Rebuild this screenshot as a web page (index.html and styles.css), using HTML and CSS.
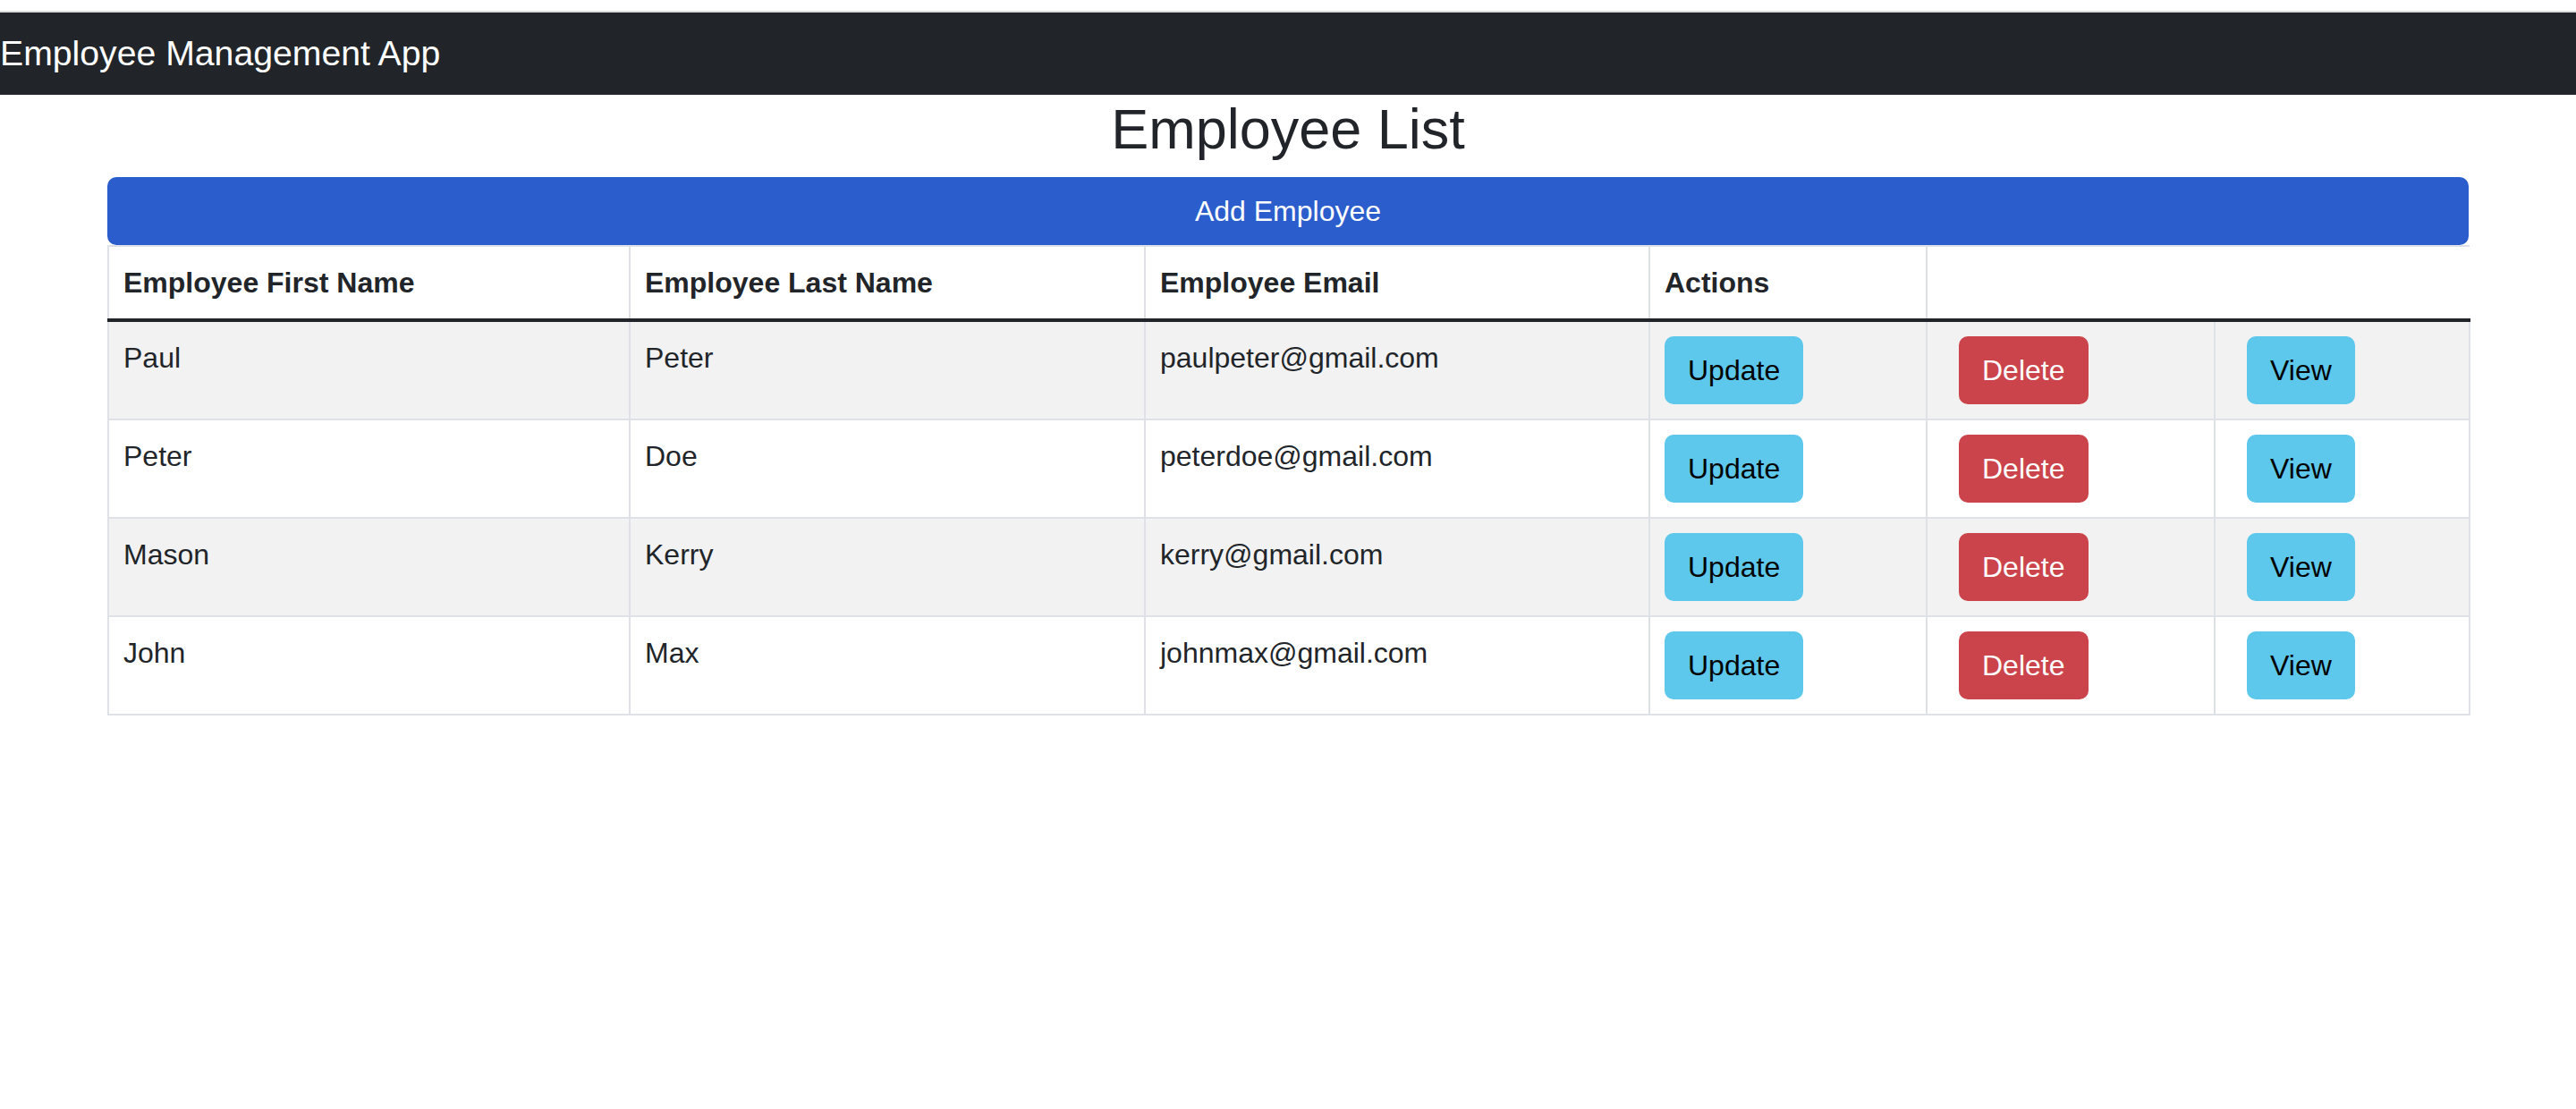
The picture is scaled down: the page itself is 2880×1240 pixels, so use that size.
FILE: index.html
```html
<!DOCTYPE html>
<html lang="en">
<head>
<meta charset="utf-8">
<title>Employee Management App</title>
<link rel="stylesheet" href="styles.css">
</head>
<body>
<header class="navbar">
  <span class="brand">Employee Management App</span>
</header>
<main class="container">
  <h2 class="title">Employee List</h2>
  <button class="btn btn-primary btn-block">Add Employee</button>
  <table class="table">
    <colgroup>
      <col class="c1"><col class="c2"><col class="c3"><col class="c4"><col class="c5"><col class="c6">
    </colgroup>
    <thead>
      <tr>
        <th>Employee First Name</th>
        <th>Employee Last Name</th>
        <th>Employee Email</th>
        <th>Actions</th>
      </tr>
    </thead>
    <tbody>
      <tr class="odd">
        <td>Paul</td><td>Peter</td><td>paulpeter@gmail.com</td>
        <td><button class="btn btn-info">Update</button></td>
        <td><button class="btn btn-danger shift">Delete</button></td>
        <td><button class="btn btn-info shift">View</button></td>
      </tr>
      <tr>
        <td>Peter</td><td>Doe</td><td>peterdoe@gmail.com</td>
        <td><button class="btn btn-info">Update</button></td>
        <td><button class="btn btn-danger shift">Delete</button></td>
        <td><button class="btn btn-info shift">View</button></td>
      </tr>
      <tr class="odd">
        <td>Mason</td><td>Kerry</td><td>kerry@gmail.com</td>
        <td><button class="btn btn-info">Update</button></td>
        <td><button class="btn btn-danger shift">Delete</button></td>
        <td><button class="btn btn-info shift">View</button></td>
      </tr>
      <tr>
        <td>John</td><td>Max</td><td>johnmax@gmail.com</td>
        <td><button class="btn btn-info">Update</button></td>
        <td><button class="btn btn-danger shift">Delete</button></td>
        <td><button class="btn btn-info shift">View</button></td>
      </tr>
    </tbody>
  </table>
</main>
</body>
</html>
```
FILE: styles.css
```css
html, body {
  margin: 0;
  padding: 0;
  background: #ffffff;
}
body {
  padding-top: 12px;
  font-family: "Liberation Sans", Arial, sans-serif;
  font-size: 32px;
  line-height: 1.5;
  color: #212529;
}
.navbar {
  border-top: 2px solid #dcdcdc;
  background: #212529;
  height: 92px;
  display: flex;
  align-items: center;
}
.brand {
  color: #ffffff;
  font-size: 39.2px;
  line-height: 60px;
}
.container {
  width: 2640px;
  margin: 0 auto;
}
.title {
  margin: 0 0 16px;
  font-size: 63px;
  font-weight: 500;
  line-height: 76px;
  text-align: center;
  color: #212529;
}
.btn {
  font-family: inherit;
  font-size: 32px;
  line-height: 48px;
  padding: 12px 24px;
  border: 2px solid transparent;
  border-radius: 10px;
  cursor: pointer;
  display: inline-block;
  vertical-align: top;
}
.btn-block {
  display: block;
  width: 100%;
  height: 76px;
}
.btn-primary {
  background: #2b5dcd;
  border-color: #2b5dcd;
  color: #ffffff;
}
.btn-info {
  background: #5dc8eb;
  border-color: #5dc8eb;
  color: #000000;
}
.btn-danger {
  background: #cb444b;
  border-color: #cb444b;
  color: #ffffff;
}
.shift {
  margin-left: 19px;
}
.table {
  width: 2640px;
  border-collapse: collapse;
  table-layout: fixed;
}
.c1 { width: 583px; }
.c2 { width: 576px; }
.c3 { width: 564px; }
.c4 { width: 310px; }
.c5 { width: 322px; }
.c6 { width: 285px; }
.table tr {
  border-top: 2px solid #dee2e6;
  border-bottom: 2px solid #dee2e6;
}
.table th,
.table td {
  padding: 16px;
  border-left: 2px solid #dee2e6;
  border-right: 2px solid #dee2e6;
  text-align: left;
  vertical-align: top;
  line-height: 48px;
}
.table th {
  font-weight: bold;
}
.table thead tr {
  border-bottom: 4px solid #212529;
}
.table tbody tr.odd td {
  background: #f2f2f2;
}
```
